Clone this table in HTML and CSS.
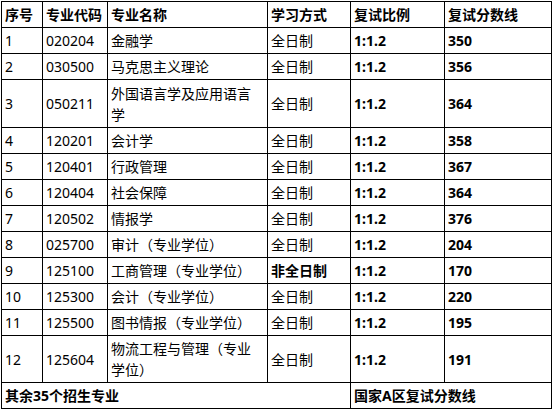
FILE: index.html
```html
<!DOCTYPE html>
<html lang="zh-CN">
<head>
<meta charset="utf-8">
<title>复试分数线</title>
<link rel="stylesheet" href="styles.css">
</head>
<body>
<table class="score-table">
  <colgroup>
    <col class="c-no">
    <col class="c-code">
    <col class="c-name">
    <col class="c-mode">
    <col class="c-ratio">
    <col class="c-score">
  </colgroup>
  <thead>
    <tr class="row">
      <th>序号</th><th>专业代码</th><th>专业名称</th><th>学习方式</th><th>复试比例</th><th>复试分数线</th>
    </tr>
  </thead>
  <tbody>
    <tr class="row"><td>1</td><td>020204</td><td>金融学</td><td>全日制</td><td class="b">1:1.2</td><td class="b">350</td></tr>
    <tr class="row"><td>2</td><td>030500</td><td>马克思主义理论</td><td>全日制</td><td class="b">1:1.2</td><td class="b">356</td></tr>
    <tr class="row tall"><td>3</td><td>050211</td><td>外国语言学及应用语言学</td><td>全日制</td><td class="b">1:1.2</td><td class="b">364</td></tr>
    <tr class="row"><td>4</td><td>120201</td><td>会计学</td><td>全日制</td><td class="b">1:1.2</td><td class="b">358</td></tr>
    <tr class="row"><td>5</td><td>120401</td><td>行政管理</td><td>全日制</td><td class="b">1:1.2</td><td class="b">367</td></tr>
    <tr class="row"><td>6</td><td>120404</td><td>社会保障</td><td>全日制</td><td class="b">1:1.2</td><td class="b">364</td></tr>
    <tr class="row"><td>7</td><td>120502</td><td>情报学</td><td>全日制</td><td class="b">1:1.2</td><td class="b">376</td></tr>
    <tr class="row"><td>8</td><td>025700</td><td>审计（专业学位）</td><td>全日制</td><td class="b">1:1.2</td><td class="b">204</td></tr>
    <tr class="row"><td>9</td><td>125100</td><td>工商管理（专业学位）</td><td class="b">非全日制</td><td class="b">1:1.2</td><td class="b">170</td></tr>
    <tr class="row"><td>10</td><td>125300</td><td>会计（专业学位）</td><td>全日制</td><td class="b">1:1.2</td><td class="b">220</td></tr>
    <tr class="row"><td>11</td><td>125500</td><td>图书情报（专业学位）</td><td>全日制</td><td class="b">1:1.2</td><td class="b">195</td></tr>
    <tr class="row tall2"><td>12</td><td>125604</td><td>物流工程与管理（专业学位）</td><td>全日制</td><td class="b">1:1.2</td><td class="b">191</td></tr>
  </tbody>
  <tfoot>
    <tr class="row"><td colspan="4" class="b">其余35个招生专业</td><td colspan="2" class="b">国家A区复试分数线</td></tr>
  </tfoot>
</table>
</body>
</html>
```

FILE: styles.css
```css
html, body {
  margin: 0;
  padding: 0;
  background: #ffffff;
}

body {
  padding: 1px 0 0 1px;
  font-family: "Noto Sans", "Noto Sans CJK SC", sans-serif;
  font-size: 14px;
  color: #000000;
}

.score-table {
  border-collapse: collapse;
  table-layout: fixed;
  width: 550px;
}

.c-no { width: 41px; }
.c-code { width: 65px; }
.c-name { width: 160px; }
.c-mode { width: 83px; }
.c-ratio { width: 94px; }
.c-score { width: 107px; }

.score-table th,
.score-table td {
  border: 1px solid #000000;
  padding: 0 4px 0 3px;
  text-align: left;
  vertical-align: middle;
  line-height: 21px;
  font-weight: normal;
}

.score-table th {
  font-weight: bold;
}

.score-table td.b {
  font-weight: bold;
}

.row {
  height: 26px;
}

.row.tall {
  height: 48px;
}

.row.tall2 {
  height: 47px;
}
```
